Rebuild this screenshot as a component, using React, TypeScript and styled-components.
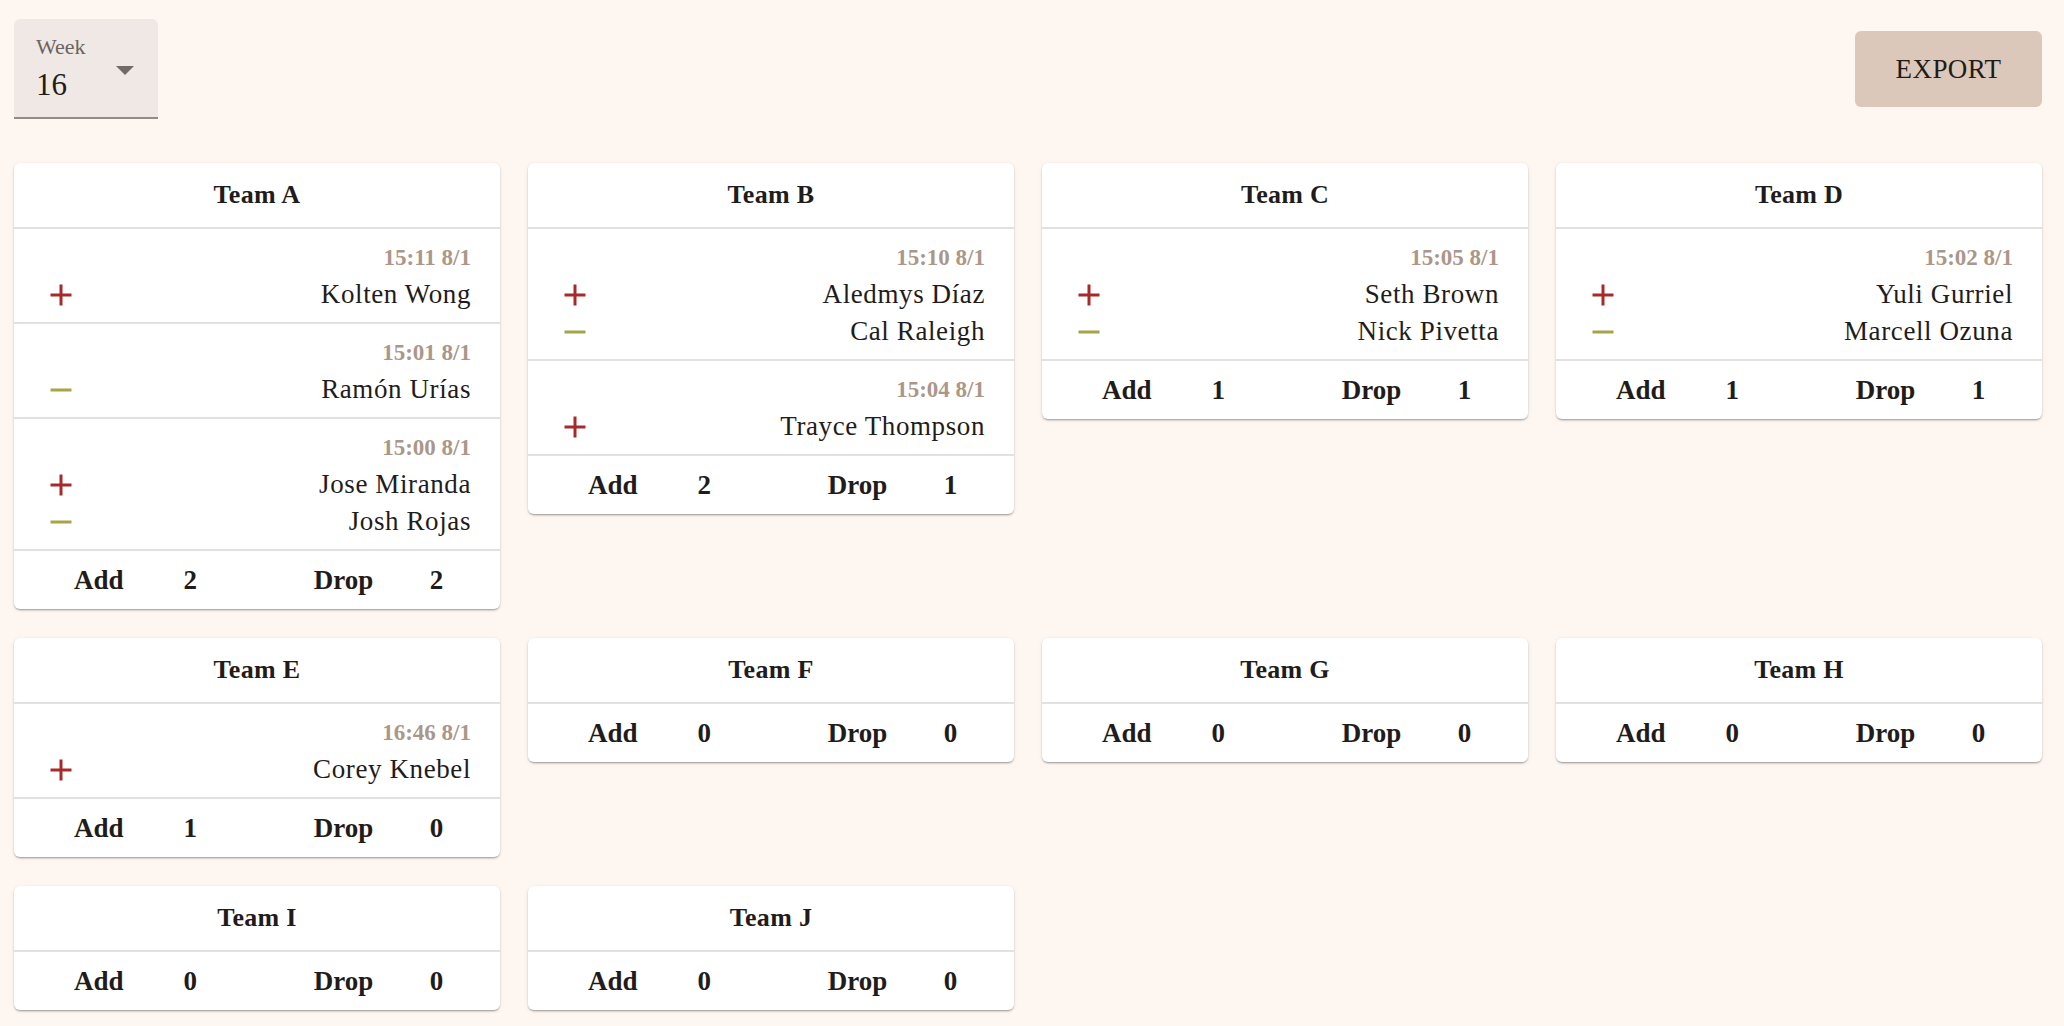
import React from 'react'
import styled, { createGlobalStyle } from 'styled-components'

const GlobalStyle = createGlobalStyle`
  html, body {
    margin: 0;
    background: #fdf6f1;
    font-family: 'Liberation Serif', 'DejaVu Serif', serif;
    color: #1f1c1b;
  }
`;

const Page = styled.div`
  padding: 19px 22px 40px 14px;
`;

const TopBar = styled.div`
  display: flex;
  justify-content: space-between;
  align-items: flex-start;
  margin-bottom: 44px;
`;

const WeekSelect = styled.div`
  position: relative;
  box-sizing: border-box;
  width: 144px;
  height: 100px;
  padding: 10px 0 0 22px;
  background: #efe8e5;
  border-radius: 6px 6px 0 0;
  border-bottom: 2px solid #928a86;
`;

const WeekLabel = styled.div`
  font-size: 22px;
  line-height: 36px;
  color: #6b6461;
`;

const WeekValue = styled.div`
  font-size: 31px;
  line-height: 40px;
  color: #1e1b1a;
`;

const Caret = styled.span`
  position: absolute;
  left: 102px;
  top: 47px;
  width: 0;
  height: 0;
  border-left: 9px solid transparent;
  border-right: 9px solid transparent;
  border-top: 9px solid #716a67;
`;

const ExportButton = styled.button`
  margin-top: 12px;
  width: 187px;
  height: 76px;
  border: none;
  border-radius: 6px;
  background: #dbc8ba;
  color: #1f1c1b;
  font-family: inherit;
  font-size: 27px;
  letter-spacing: 0.4px;
  cursor: pointer;
`;

const TeamGrid = styled.div`
  display: grid;
  grid-template-columns: repeat(4, 486px);
  column-gap: 28px;
  row-gap: 29px;
  align-items: start;
`;

const Card = styled.div`
  background: #ffffff;
  border-radius: 6px;
  overflow: hidden;
  box-shadow: 0 2px 2px -1px rgba(0, 0, 0, 0.25), 0 1px 2px 0 rgba(0, 0, 0, 0.12), 0 1px 4px 0 rgba(0, 0, 0, 0.08);
`;

const CardHeader = styled.div`
  height: 64px;
  display: flex;
  align-items: center;
  justify-content: center;
  font-size: 26px;
  font-weight: 700;
  letter-spacing: 0.3px;
  border-bottom: 2px solid #e3e1df;
`;

const Entry = styled.div`
  padding: 10px 29px 9px;
  border-bottom: 2px solid #e3e1df;
`;

const Stamp = styled.div`
  text-align: right;
  font-size: 23px;
  font-weight: 700;
  line-height: 37px;
  color: #ab978a;
`;

const MoveRow = styled.div`
  display: flex;
  align-items: center;
  justify-content: space-between;
  height: 37px;
`;

const PlayerName = styled.span`
  font-size: 27px;
  letter-spacing: 0.6px;
  line-height: 37px;
`;

const MoveIcon = styled.svg<{ $add: boolean }>`
  width: 36px;
  height: 36px;
  fill: ${p => (p.$add ? '#a62a2a' : '#a8a347')};
  flex-shrink: 0;
`;

const Footer = styled.div`
  display: grid;
  grid-template-columns: 1fr 1fr;
  height: 58px;
`;

const Tally = styled.div`
  display: flex;
  align-items: center;
  justify-content: space-evenly;
  font-size: 27px;
  font-weight: 700;
`;

type Move = { add: boolean; name: string }
type Txn = { time: string; moves: Move[] }
type Team = { name: string; txns: Txn[] }

const plus = (name: string): Move => ({ add: true, name })
const minus = (name: string): Move => ({ add: false, name })

const teams: Team[] = [
  {
    name: 'Team A',
    txns: [
      { time: '15:11 8/1', moves: [plus('Kolten Wong')] },
      { time: '15:01 8/1', moves: [minus('Ramón Urías')] },
      { time: '15:00 8/1', moves: [plus('Jose Miranda'), minus('Josh Rojas')] },
    ],
  },
  {
    name: 'Team B',
    txns: [
      { time: '15:10 8/1', moves: [plus('Aledmys Díaz'), minus('Cal Raleigh')] },
      { time: '15:04 8/1', moves: [plus('Trayce Thompson')] },
    ],
  },
  { name: 'Team C', txns: [{ time: '15:05 8/1', moves: [plus('Seth Brown'), minus('Nick Pivetta')] }] },
  { name: 'Team D', txns: [{ time: '15:02 8/1', moves: [plus('Yuli Gurriel'), minus('Marcell Ozuna')] }] },
  { name: 'Team E', txns: [{ time: '16:46 8/1', moves: [plus('Corey Knebel')] }] },
  { name: 'Team F', txns: [] },
  { name: 'Team G', txns: [] },
  { name: 'Team H', txns: [] },
  { name: 'Team I', txns: [] },
  { name: 'Team J', txns: [] },
]

const MoveGlyph = ({ add }: { add: boolean }) => (
  <MoveIcon $add={add} viewBox="0 0 24 24">
    {add ? <path d="M19 13h-6v6h-2v-6H5v-2h6V5h2v6h6v2z" /> : <path d="M19 13H5v-2h14v2z" />}
  </MoveIcon>
)

const TeamCard = ({ team }: { team: Team }) => {
  const all = team.txns.flatMap(t => t.moves)
  const adds = all.filter(m => m.add).length
  const drops = all.length - adds
  return (
    <Card>
      <CardHeader>{team.name}</CardHeader>
      {team.txns.map(txn => (
        <Entry key={txn.time}>
          <Stamp>{txn.time}</Stamp>
          {txn.moves.map(m => (
            <MoveRow key={m.name}>
              <MoveGlyph add={m.add} />
              <PlayerName>{m.name}</PlayerName>
            </MoveRow>
          ))}
        </Entry>
      ))}
      <Footer>
        <Tally>
          <span>Add</span>
          <span>{adds}</span>
        </Tally>
        <Tally>
          <span>Drop</span>
          <span>{drops}</span>
        </Tally>
      </Footer>
    </Card>
  )
}

const App = () => {
  return (
    <Page>
      <GlobalStyle />
      <TopBar>
        <WeekSelect>
          <WeekLabel>Week</WeekLabel>
          <WeekValue>16</WeekValue>
          <Caret />
        </WeekSelect>
        <ExportButton>EXPORT</ExportButton>
      </TopBar>
      <TeamGrid>
        {teams.map(t => (
          <TeamCard key={t.name} team={t} />
        ))}
      </TeamGrid>
    </Page>
  )
}

export default App
